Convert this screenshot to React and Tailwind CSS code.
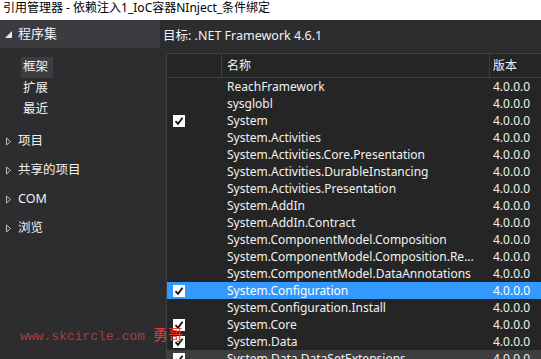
import React from 'react';

const FONT = { fontFamily: '"Noto Sans", "Noto Sans CJK SC", sans-serif' };

const rows = [
  { name: 'ReachFramework' },
  { name: 'sysglobl' },
  { name: 'System', checked: true },
  { name: 'System.Activities' },
  { name: 'System.Activities.Core.Presentation' },
  { name: 'System.Activities.DurableInstancing' },
  { name: 'System.Activities.Presentation' },
  { name: 'System.AddIn' },
  { name: 'System.AddIn.Contract' },
  { name: 'System.ComponentModel.Composition' },
  { name: 'System.ComponentModel.Composition.Re...' },
  { name: 'System.ComponentModel.DataAnnotations' },
  { name: 'System.Configuration', checked: true, selected: true },
  { name: 'System.Configuration.Install' },
  { name: 'System.Core', checked: true },
  { name: 'System.Data', checked: true },
  { name: 'System.Data.DataSetExtensions', checked: true, hover: true },
];

function Check() {
  return (
    <div className="w-[12px] h-[12px] bg-white flex items-center justify-center">
      <svg width="10" height="10" viewBox="0 0 10 10">
        <path d="M1.5 5.2 L4 7.8 L8.6 1.8" fill="none" stroke="#111" strokeWidth="1.8" />
      </svg>
    </div>
  );
}

function Arrow() {
  return (
    <svg width="7" height="9" viewBox="0 0 7 9" className="shrink-0">
      <path d="M1.5 1 L5.5 4.5 L1.5 8 Z" fill="none" stroke="#bdbdbd" strokeWidth="1" />
    </svg>
  );
}

function NavGroup({ label }) {
  return (
    <div className="flex items-center gap-[6px] pl-[5px] h-[29px] text-[12.5px] text-[#f1f1f1]">
      <Arrow />
      <span>{label}</span>
    </div>
  );
}

export default function App() {
  return (
    <div className="w-[541px] h-[359px] overflow-hidden flex flex-col bg-[#2d2d30] relative" style={FONT}>
      {/* window title */}
      <div className="h-[20px] shrink-0 bg-white flex items-center pl-[3px] text-[12px] text-black leading-none">
        <span className="-mt-[4px]">引用管理器 - 依赖注入1_IoC容器NInject_条件绑定</span>
      </div>

      <div className="flex flex-1 min-h-0">
        {/* left nav */}
        <div className="w-[160px] shrink-0 flex flex-col">
          <div className="h-[28px] shrink-0 bg-[#3c3c40] flex items-center pl-[5px] gap-[6px] text-[13px] text-[#f1f1f1]">
            <svg width="7" height="7" viewBox="0 0 7 7">
              <path d="M7 0 L7 7 L0 7 Z" fill="#e8e8e8" />
            </svg>
            <span>程序集</span>
          </div>
          <div className="flex flex-col pl-[21px] pt-[9px] text-[12.5px] text-[#f1f1f1]">
            <div className="h-[21px] w-[32px] bg-[#3e3e42] flex items-center pl-[2px]">框架</div>
            <div className="h-[21px] flex items-center pl-[2px]">扩展</div>
            <div className="h-[21px] flex items-center pl-[2px]">最近</div>
          </div>
          <div className="flex flex-col pt-[7px]">
            <NavGroup label="项目" />
            <NavGroup label="共享的项目" />
            <NavGroup label="COM" />
            <NavGroup label="浏览" />
          </div>
        </div>

        {/* right panel */}
        <div className="flex-1 min-w-0 flex flex-col">
          <div className="h-[33px] shrink-0 flex items-center pl-[3px] text-[12.5px] text-[#f1f1f1]">
            目标: .NET Framework 4.6.1
          </div>
          <div className="ml-[6px] flex-1 min-h-0 overflow-hidden bg-[#252526] border-t border-l border-[#3f3f46] text-[12px] text-[#f1f1f1]">
            <div className="flex h-[24px] border-b border-[#3f3f46]">
              <div className="w-[55px] shrink-0 border-r border-[#3f3f46]" />
              <div className="w-[268px] shrink-0 border-r border-[#3f3f46] flex items-center pl-[5px]">名称</div>
              <div className="flex-1 flex items-center pl-[3px]">版本</div>
            </div>
            {rows.map((r) => (
              <div
                key={r.name}
                className={
                  'flex h-[17px] items-center ' +
                  (r.selected ? 'bg-[#3399ff] text-white' : r.hover ? 'bg-[#3e3e40]' : '')
                }
              >
                <div className="w-[55px] shrink-0 pl-[6px] flex items-center">{r.checked && <Check />}</div>
                <div className="w-[268px] shrink-0 pl-[5px] whitespace-nowrap overflow-hidden">{r.name}</div>
                <div className="flex-1 pl-[3px] whitespace-nowrap">4.0.0.0</div>
              </div>
            ))}
          </div>
        </div>
      </div>

      {/* watermark */}
      <div
        className="absolute left-[20px] top-[323px] text-[13px] text-[#b03a3a] whitespace-nowrap"
        style={{ fontFamily: '"Liberation Mono", "Noto Sans CJK SC", monospace' }}
      >
        www.skcircle.com <span className="text-[#e23b2e] text-[15px]" style={{ fontFamily: '"Noto Sans CJK SC", serif' }}>勇哥</span>
      </div>
    </div>
  );
}
